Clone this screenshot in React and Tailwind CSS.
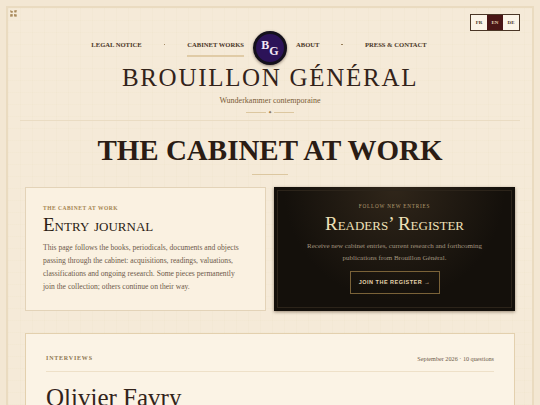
import React from 'react';

const serif = "font-['Liberation_Serif',serif]";

const NavLink = ({ children, active }) => (
  <a className={`whitespace-nowrap pb-[5px] text-[6.6px] font-bold uppercase leading-[10px] text-[#4a3626] border-b-2 ${active ? 'border-[#e0cba6]' : 'border-transparent'}`}>
    {children}
  </a>
);

const Dot = () => <span className="mb-[7px] h-[1.5px] w-[1.5px] rounded-full bg-[#8a6f48]" />;

const Monogram = () => (
  <div className="relative z-10 mx-[9px] flex h-[34px] w-[34px] shrink-0 items-center justify-center rounded-full border-[3px] border-[#14101c] bg-[#2c1358] shadow-[0_1px_3px_rgba(40,20,10,0.5)]">
    <span className="mt-[-6px] text-[12px] font-bold leading-none text-[#f3e8f5]">B</span>
    <span className="mt-[6px] text-[12px] font-bold leading-none text-[#f3e8f5]">G</span>
  </div>
);

const LangButton = ({ children, active }) => (
  <span className={`flex h-[15px] w-4 items-center justify-center text-[5px] font-bold ${active ? 'bg-[#4a1616] text-[#e8d6bc]' : 'bg-[#fbf4e8] text-[#4a3626]'}`}>
    {children}
  </span>
);

export default function App() {
  return (
    <div className={`h-[405px] w-[540px] overflow-hidden bg-[#f3e7d3] p-[6px] ${serif}`}>
      <div className="relative h-[500px] border-2 border-[#eadbc0] bg-[#f5ead8] bg-[linear-gradient(rgba(200,170,120,0.03)_1px,transparent_1px),linear-gradient(90deg,rgba(200,170,120,0.03)_1px,transparent_1px)] bg-[size:12px_12px] px-[12px]">
        <svg className="absolute left-[1px] top-[1px] h-[9px] w-[9px]" viewBox="0 0 9 9" fill="#a98a5c">
          <path d="M1 1.2 L4 2.2 L3.4 4 L1.6 3.6 Z" />
          <path d="M5 1.6 L7.8 1 L7.4 3.6 L5.4 3.6 Z" />
          <path d="M1.2 5.2 L3.6 5 L3.8 7.4 L1.2 7.8 Z" />
          <path d="M5 5 L7.8 5.4 L7.6 7.8 L5.2 7.4 Z" />
        </svg>

        <div className="absolute right-[12px] top-[6px] flex gap-0 border border-[#4a3626]">
          <LangButton>FR</LangButton>
          <LangButton active>EN</LangButton>
          <LangButton>DE</LangButton>
        </div>

        <header className="flex flex-col items-center border-b border-[#eadcc3] pt-[23px] pb-[5px]">
          <nav className="grid w-full grid-cols-[1fr_auto_1fr] items-center">
            <div className="flex items-center justify-end gap-[22px]">
              <NavLink>Legal notice</NavLink>
              <Dot />
              <NavLink active>Cabinet works</NavLink>
            </div>
            <Monogram />
            <div className="flex items-center justify-start gap-[22px]">
              <NavLink>About</NavLink>
              <Dot />
              <NavLink>Press &amp; contact</NavLink>
            </div>
          </nav>
          <h2 className="mt-[-1px] text-[25px] leading-[27px] tracking-[1.7px] text-[#33231a]">BROUILLON GÉNÉRAL</h2>
          <p className="mt-[4px] text-[8px] leading-[12px] text-[#7a5c36]">Wunderkammer contemporaine</p>
          <div className="mt-[2px] flex items-center gap-[1px]">
            <span className="h-px w-[20px] bg-[#dcc7a0]" />
            <span className="flex h-[6px] w-[6px] items-center justify-center text-[5px] leading-none text-[#8a6a3f]">✦</span>
            <span className="h-px w-[20px] bg-[#dcc7a0]" />
          </div>
        </header>

        <main className="flex flex-col items-center px-[5px]">
          <h1 className="mt-[9px] text-[29px] font-bold leading-[40px] text-[#2a1c14]">THE CABINET AT WORK</h1>
          <span className="mt-[4px] h-px w-[36px] bg-[#dcc7a0]" />

          <section className="mt-[12px] grid w-full grid-cols-2 gap-[8px]">
            <div className="h-[124px] min-w-0 border border-[#e3d3b8] bg-[#faf1e1] px-[17px] pt-[16px]">
              <p className="text-[5.5px] font-bold uppercase leading-[8px] tracking-[0.5px] text-[#a4844f]">The cabinet at work</p>
              <h3 className="mt-[2px] text-[19px] leading-[22px] text-[#2a1c14] [font-variant:small-caps]">Entry journal</h3>
              <p className="mt-[5px] text-[7.6px] leading-[13px] text-[#6e5a4a]">
                This page follows the books, periodicals, documents and objects passing through the cabinet: acquisitions, readings, valuations, classifications and ongoing research. Some pieces permanently join the collection; others continue on their way.
              </p>
            </div>
            <div className="h-[124px] min-w-0 bg-[#14100b] bg-[radial-gradient(ellipse_at_top,#30261a,#14100b_65%)] p-[3px] shadow-[0_1px_3px_rgba(60,40,20,0.5)]">
              <div className="flex h-full flex-col items-center border border-[#2c241a] pt-[11px]">
                <p className="text-[5.2px] uppercase leading-[8px] tracking-[0.8px] text-[#b39c70]">Follow new entries</p>
                <h3 className="mt-[3px] text-[19px] leading-[22px] text-[#efe0b8] [font-variant:small-caps]">Readers’ Register</h3>
                <p className="mt-[5px] w-[190px] text-center text-[7px] leading-[12px] text-[#a39680]">
                  Receive new cabinet entries, current research and forthcoming publications from Brouillon Général.
                </p>
                <a className="mt-[7px] flex h-[23px] w-[90px] items-center justify-center border border-[#7a6238] font-['Liberation_Sans',sans-serif] text-[5.5px] font-bold uppercase tracking-[0.5px] text-[#e4d4ac]">
                  Join the register →
                </a>
              </div>
            </div>
          </section>

          <article className="mt-[22px] w-full border border-[#e3d0ae] bg-[#fbf3e5] px-[20px] pt-[20px]">
            <div className="flex items-center justify-between border-b border-[#eee0c8] pb-[8px]">
              <span className="text-[6px] font-bold uppercase tracking-[0.8px] text-[#8d7650]">Interviews</span>
              <span className="text-[6.2px] text-[#6e5a4a]">September 2026 · 10 questions</span>
            </div>
            <h2 className="mt-[9px] text-[25px] leading-[34px] text-[#33231a]">Olivier Favry</h2>
          </article>
        </main>
      </div>
    </div>
  );
}
